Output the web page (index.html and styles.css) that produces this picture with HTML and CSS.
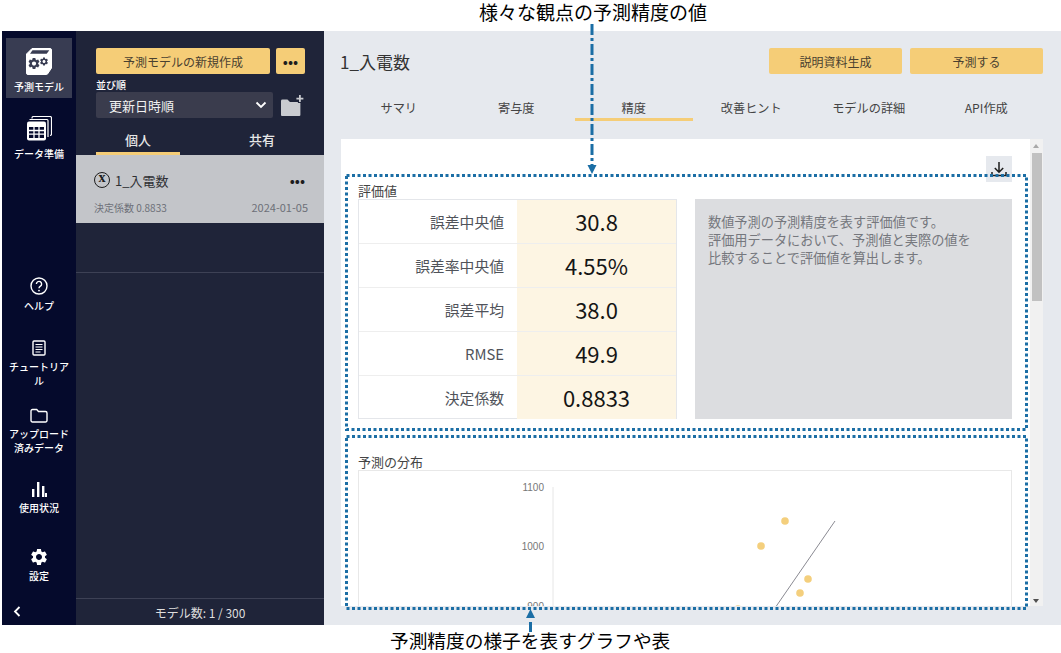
FILE: index.html
```html
<!DOCTYPE html>
<html lang="ja">
<head>
  <meta charset="UTF-8">
  <meta name="viewport" content="width=device-width, initial-scale=1.0">
  <title>予測モデル</title>
  <link rel="stylesheet" href="styles.css">
</head>
<body>

  <svg width="0" height="0" class="defs">
    <symbol id="gear" viewBox="0 0 24 24">
      <path d="M19.14 12.94c.04-.3.06-.61.06-.94 0-.32-.02-.64-.07-.94l2.03-1.58c.18-.14.23-.41.12-.61l-1.92-3.32c-.12-.22-.37-.29-.59-.22l-2.39.96c-.5-.38-1.03-.7-1.62-.94l-.36-2.54c-.04-.24-.24-.41-.48-.41h-3.84c-.24 0-.43.17-.47.41l-.36 2.54c-.59.24-1.13.57-1.62.94l-2.39-.96c-.22-.08-.47 0-.59.22L2.74 8.87c-.12.21-.08.47.12.61l2.03 1.58c-.05.3-.09.63-.09.94s.02.64.07.94l-2.03 1.58c-.18.14-.23.41-.12.61l1.92 3.32c.12.22.37.29.59.22l2.39-.96c.5.38 1.03.7 1.62.94l.36 2.54c.05.24.24.41.48.41h3.84c.24 0 .44-.17.47-.41l.36-2.54c.59-.24 1.13-.56 1.62-.94l2.39.96c.22.08.47 0 .59-.22l1.92-3.32c.12-.22.07-.47-.12-.61l-2.01-1.58zM12 15.6c-1.98 0-3.6-1.62-3.6-3.6s1.62-3.6 3.6-3.6 3.6 1.62 3.6 3.6-1.62 3.6-3.6 3.6z"/>
    </symbol>
  </svg>

  <div class="app">
    <nav class="rail">
      <a class="rail-item active">
        <svg width="26" height="27" viewBox="0 0 26 27">
          <path d="M6 .5h18a1.5 1.5 0 0 1 1.5 1.5v18l-4 6a1 1 0 0 1-1 .5H2A1.5 1.5 0 0 1 .5 25V6z" fill="#fff" stroke="#fff" stroke-linejoin="round"/>
          <path d="M6.5 2.2h16.8l-2.600 3.600H4z" fill="#383c52"/>
          <use href="#gear" x="1" y="8.500" width="14" height="14" fill="#383c52"/>
          <use href="#gear" x="13" y="8.500" width="10" height="10" fill="#383c52"/>
        </svg>
        <span>予測モデル</span>
      </a>
      <a class="rail-item">
        <svg width="26" height="26" viewBox="0 0 26 26">
          <path d="M6 2.5V2a1.5 1.5 0 0 1 1.5-1.5H24A1.5 1.5 0 0 1 25.5 2v16a1.5 1.5 0 0 1-1.5 1.5" fill="none" stroke="#fff" stroke-width="1.2"/>
          <path d="M3.5 3.5H21a1 1 0 0 1 1 1V21" fill="none" stroke="#fff" stroke-width="1.2"/>
          <rect x="1" y="5.5" width="19" height="19" rx="2" fill="#fff"/>
          <path d="M3 11h15v11H3z" fill="#050a2c"/>
          <path d="M3 14.5h15M3 18.2h15M8 11v11M13 11v11" stroke="#fff" stroke-width="1.3"/>
        </svg>
        <span>データ準備</span>
      </a>

      <div class="rail-bottom">
        <a class="rail-item help">
          <svg width="18" height="18" viewBox="0 0 18 18">
            <circle cx="9" cy="9" r="8" fill="none" stroke="#fff" stroke-width="1.4"/>
            <path d="M6.4 7a2.6 2.6 0 1 1 4 2.2c-.9.6-1.4 1-1.4 2.1" fill="none" stroke="#fff" stroke-width="1.4"/>
            <circle cx="9" cy="13.6" r=".9" fill="#fff"/>
          </svg>
          <span>ヘルプ</span>
        </a>
        <a class="rail-item tutorial">
          <svg width="14" height="16" viewBox="0 0 14 16">
            <rect x="1" y="1" width="12" height="14" rx="1" fill="none" stroke="#fff" stroke-width="1.4"/>
            <path d="M3.5 4.5h7M3.5 7h7M3.5 9.5h7M3.5 12h5" stroke="#fff" stroke-width="1.2"/>
          </svg>
          <span>チュートリアル</span>
        </a>
        <a class="rail-item upload">
          <svg width="18" height="15" viewBox="0 0 18 15">
            <path d="M1 3a1.5 1.5 0 0 1 1.5-1.5h4.2l1.8 2h7A1.5 1.5 0 0 1 17 5v7.5a1.5 1.5 0 0 1-1.5 1.5h-13A1.5 1.5 0 0 1 1 12.500z" fill="none" stroke="#fff" stroke-width="1.4"/>
          </svg>
          <span>アップロード済みデータ</span>
        </a>
        <a class="rail-item usage">
          <svg width="16" height="15" viewBox="0 0 16 15">
            <path d="M1 7h2.400v8H1zM6 0h2.400v15H6zM11 4h2.400v11H11zM14 11h2v4h-2z" fill="#fff"/>
          </svg>
          <span>使用状況</span>
        </a>
        <a class="rail-item settings">
          <svg width="20" height="20"><use href="#gear" width="20" height="20" fill="#fff"/></svg>
          <span>設定</span>
        </a>
        <svg class="collapse" width="8" height="11" viewBox="0 0 8 11">
          <path d="M6.500 1 2 5.500 6.500 10" fill="none" stroke="#fff" stroke-width="1.800"/>
        </svg>
      </div>
    </nav>

    <aside class="sidebar">
      <div class="sidebar-top">
        <div class="new-row">
          <button class="btn btn-new">予測モデルの新規作成</button>
          <button class="btn btn-more">•••</button>
        </div>
        <div class="sort-label">並び順</div>
        <div class="sort-row">
          <div class="sort-select">
            <span>更新日時順</span>
            <svg width="12" height="8" viewBox="0 0 12 8"><path d="M1.500 1.500 6 6l4.500-4.500" fill="none" stroke="#fff" stroke-width="1.800"/></svg>
          </div>
          <svg class="add-folder" width="25" height="23" viewBox="0 0 25 23">
            <path d="M1 7a1.500 1.500 0 0 1 1.500-1.500h5l2.500 2.500h10.500V21a1 1 0 0 1-1 1H2a1 1 0 0 1-1-1z" fill="#c9cbd0"/>
            <path d="M20 0v9M15.500 4.500h9" stroke="#1f2439" stroke-width="4"/>
            <path d="M20 1v7M16.500 4.500h7" stroke="#c9cbd0" stroke-width="1.800"/>
          </svg>
        </div>
        <div class="side-tabs">
          <div class="side-tab active">個人</div>
          <div class="side-tab">共有</div>
        </div>
      </div>

      <div class="model-list">
        <div class="model-item">
          <div class="model-head">
            <span class="model-icon">x</span>
            <span class="model-name">1_入電数</span>
            <span class="model-more">•••</span>
          </div>
          <div class="model-meta">
            <span>決定係数 0.8833</span>
            <span class="model-date">2024-01-05</span>
          </div>
        </div>
      </div>

      <div class="sidebar-foot">モデル数: 1 / 300</div>
    </aside>

    <main class="main">
      <header class="main-head">
        <h1>1_入電数</h1>
        <div class="main-actions">
          <button class="btn btn-action">説明資料生成</button>
          <button class="btn btn-action">予測する</button>
        </div>
      </header>

      <div class="tabs">
        <div class="tab">サマリ</div>
        <div class="tab">寄与度</div>
        <div class="tab active">精度</div>
        <div class="tab">改善ヒント</div>
        <div class="tab">モデルの詳細</div>
        <div class="tab">API作成</div>
      </div>

      <div class="panel">
        <div class="panel-body">
          <div class="download-row">
            <button class="download">
              <svg width="16" height="16" viewBox="0 0 16 16">
                <path d="M8 1v10M3.800 7 8 11.200 12.200 7M1 11v3.500h14V11" fill="none" stroke="#1c1c1c" stroke-width="1.500"/>
              </svg>
            </button>
          </div>

          <h2 class="section-title">評価値</h2>
          <div class="metrics">
            <div class="metric-table">
              <div class="metric-row"><div class="metric-name">誤差中央値</div><div class="metric-value">30.8</div></div>
              <div class="metric-row"><div class="metric-name">誤差率中央値</div><div class="metric-value">4.55%</div></div>
              <div class="metric-row"><div class="metric-name">誤差平均</div><div class="metric-value">38.0</div></div>
              <div class="metric-row"><div class="metric-name">RMSE</div><div class="metric-value">49.9</div></div>
              <div class="metric-row"><div class="metric-name">決定係数</div><div class="metric-value">0.8833</div></div>
            </div>
            <div class="metric-note">
              数値予測の予測精度を表す評価値です。<br>
              評価用データにおいて、予測値と実際の値を<br>
              比較することで評価値を算出します。
            </div>
          </div>

          <h2 class="section-title chart-title">予測の分布</h2>
          <div class="chart">
            <svg width="652" height="300" viewBox="0 0 652 300">
              <path d="M194 16V300" stroke="#e6e6e6"/>
              <g class="tick">
                <text x="185" y="20">1100</text>
                <text x="185" y="79">1000</text>
                <text x="185" y="139">900</text>
              </g>
              <path d="M476 50 416 137" stroke="#8a8a92" fill="none"/>
              <g fill="#f4cf7d">
                <circle cx="426" cy="50" r="3.800"/>
                <circle cx="402" cy="75" r="3.800"/>
                <circle cx="449" cy="108" r="3.800"/>
                <circle cx="441" cy="122" r="3.800"/>
                <circle cx="379" cy="138" r="3.800"/>
              </g>
            </svg>
          </div>
        </div>
        <div class="scrollbar">
          <span class="arrow up"></span>
          <div class="thumb"></div>
          <span class="arrow down"></span>
        </div>
      </div>
    </main>
  </div>

  <!-- annotations drawn over the screenshot -->
  <div class="note note-top">様々な観点の予測精度の値</div>
  <div class="note note-bottom">予測精度の様子を表すグラフや表</div>
  <svg class="marks" width="1061" height="653" viewBox="0 0 1061 653">
    <g fill="none" stroke="#1b6ea5" stroke-width="3">
      <rect x="346.500" y="175.500" width="680" height="254" stroke-dasharray="3 2.500"/>
      <rect x="346.500" y="436.500" width="680" height="172" stroke-dasharray="3 2.500"/>
      <path d="M592 24V166" stroke-dasharray="11 3 3 3"/>
      <path d="M530.500 622V632"/>
    </g>
    <path d="M587.500 165h9l-4.500 9zM530.500 609l4.500 9h-9z" fill="#1b6ea5"/>
  </svg>

</body>
</html>
```

FILE: styles.css
```css
* {
  box-sizing: border-box;
}
html, body {
  margin: 0;
  height: 100%;
  background: #fff;
  overflow: hidden;
}
body {
  position: relative;
  font-family: "Noto Sans CJK JP", "Noto Sans", sans-serif;
  color: #333;
}
.defs {
  position: absolute;
}
.app {
  display: flex;
  height: 594px;
  margin: 31px 0 0 2px;
}
button {
  font-family: inherit;
  border: none;
  cursor: pointer;
}
.btn {
  background: #f5cd77;
  color: #4a4130;
  border-radius: 2px;
  font-size: 12px;
  height: 26px;
  padding: 0;
}

/* left rail */
.rail {
  width: 74px;
  flex: none;
  background: #050a2c;
  padding: 7px 4px 0;
  display: flex;
  flex-direction: column;
  color: #fff;
}
.rail-item {
  display: flex;
  flex-direction: column;
  align-items: center;
  padding-top: 10px;
  height: 60px;
  font-size: 10px;
  line-height: 14px;
  font-weight: 500;
  text-align: center;
  margin-bottom: 8px;
}
.rail-item span {
  margin-top: 5px;
}
.rail-item.active {
  background: #383c52;
}
.rail-item svg {
  flex: none;
}
.rail-bottom {
  display: flex;
  flex-direction: column;
  margin-top: 103px;
}
.rail-bottom .rail-item {
  height: auto;
  padding-top: 0;
  margin-bottom: 0;
}
.rail-bottom .rail-item span {
  margin-top: 4px;
}
.rail-item.tutorial {
  margin-top: 27px;
}
.rail-item.upload {
  margin-top: 20px;
}
.rail-item.usage {
  margin-top: 27px;
}
.rail-item.settings {
  margin-top: 32px;
}
.rail-bottom .settings span {
  margin-top: 2px;
}
.rail-bottom .collapse {
  margin: 23px 0 0 7px;
}

/* model list */
.sidebar {
  width: 248px;
  flex: none;
  background: #1f2439;
  display: flex;
  flex-direction: column;
  color: #fff;
}
.sidebar-top {
  padding: 17px 19px 0 20px;
}
.new-row {
  display: flex;
  gap: 6px;
}
.btn-new {
  width: 174px;
}
.btn-more {
  width: 29px;
  color: #1d1d1d;
  font-size: 15px;
  line-height: 26px;
}
.sort-label {
  font-size: 10px;
  line-height: 14px;
  font-weight: 500;
  margin-top: 4px;
}
.sort-row {
  display: flex;
  align-items: center;
  gap: 7px;
}
.sort-select {
  width: 178px;
  height: 26px;
  background: #3a3c4d;
  border-radius: 2px;
  padding: 0 6px 0 13px;
  display: flex;
  align-items: center;
  justify-content: space-between;
  font-size: 13px;
  color: #f1f1f1;
}
.side-tabs {
  display: flex;
  margin-top: 8px;
  width: 228px;
}
.side-tab {
  width: 84px;
  height: 29px;
  line-height: 27px;
  font-size: 13px;
  font-weight: 500;
  text-align: center;
  color: #e6e6e6;
}
.side-tab + .side-tab {
  margin-left: 40px;
}
.side-tab.active {
  border-bottom: 3px solid #f5cd77;
}
.model-list {
  height: 118px;
  border-bottom: 1px solid #3d4155;
}
.model-item {
  height: 68px;
  background: #c3c5c9;
  padding: 15px 16px 0 18px;
  color: #333;
}
.model-head {
  display: flex;
  align-items: center;
  font-size: 13px;
  height: 20px;
}
.model-icon {
  width: 16px;
  height: 16px;
  border: 1.500px solid #1d1d1d;
  border-radius: 50%;
  font-family: "Liberation Serif", serif;
  font-size: 14px;
  font-weight: 700;
  line-height: 10px;
  text-align: center;
  margin-right: 5px;
  color: #1d1d1d;
}
.model-name {
  flex: 1;
  color: #2f3034;
}
.model-more {
  font-size: 15px;
  line-height: 20px;
  color: #1d1d1d;
  margin-right: 3px;
}
.model-meta {
  display: flex;
  justify-content: space-between;
  align-items: baseline;
  font-size: 10px;
  color: #6d7078;
  margin-top: 9px;
}
.model-date {
  font-size: 11px;
}
.sidebar-foot {
  margin-top: auto;
  height: 27px;
  border-top: 1px solid #3d4155;
  text-align: center;
  font-size: 12px;
  line-height: 28px;
  color: #dedede;
}

/* main area */
.main {
  flex: 1;
  min-width: 0;
  background: #e6e9ee;
  padding: 17px 0 0 16px;
}
.main-head {
  display: flex;
  justify-content: space-between;
  align-items: center;
  width: 703px;
  height: 26px;
}
h1 {
  margin: 0;
  font-size: 17px;
  font-weight: 400;
  color: #333;
}
.main-actions {
  display: flex;
  gap: 8px;
}
.btn-action {
  width: 133px;
}
.tabs {
  display: flex;
  margin-top: 22px;
}
.tab {
  width: 117.500px;
  height: 25px;
  text-align: center;
  font-size: 12.200px;
  line-height: 24px;
  color: #444;
}
.tab.active {
  border-bottom: 3px solid #f5cd77;
}
.panel {
  display: flex;
  width: 702px;
  height: 467px;
  margin: 18px 0 0 1px;
}
.panel-body {
  width: 689px;
  background: #fff;
  overflow: hidden;
  padding: 0 18px 0 17px;
}
.download-row {
  display: flex;
  justify-content: flex-end;
  padding-top: 17px;
}
.download {
  width: 26px;
  height: 26px;
  background: #e6e9ee;
  padding: 5px;
  display: flex;
}
.section-title {
  margin: 0;
  font-size: 13px;
  font-weight: 400;
  line-height: 17px;
  color: #444;
}
.metrics {
  display: flex;
  gap: 18px;
  height: 220px;
}
.metric-table {
  width: 319px;
  border: 1px solid #e4e6ea;
  display: flex;
  flex-direction: column;
}
.metric-row {
  flex: 1;
  display: flex;
  border-bottom: 1px solid #eeeeee;
}
.metric-row:last-child {
  border-bottom: none;
}
.metric-name {
  width: 158px;
  padding-right: 13px;
  text-align: right;
  font-size: 14.800px;
  line-height: 43px;
  color: #50535a;
}
.metric-value {
  flex: 1;
  background: #fdf5e3;
  text-align: center;
  font-size: 22px;
  line-height: 43px;
  color: #151515;
}
.metric-note {
  width: 317px;
  background: #dcdde0;
  padding: 14px 13px;
  font-size: 13.200px;
  line-height: 18px;
  color: #75777d;
}
.chart-title {
  margin-top: 34px;
}
.chart {
  width: 654px;
  height: 200px;
  border: 1px solid #e8e8e8;
  border-bottom: none;
}
.chart svg {
  display: block;
}
.tick text {
  font-family: "Liberation Sans", sans-serif;
  font-size: 10px;
  fill: #777;
  text-anchor: end;
}
.scrollbar {
  width: 13px;
  background: #f1f1f1;
  position: relative;
}
.thumb {
  width: 10px;
  height: 148px;
  margin: 14px 0 0 2px;
  background: #c1c1c1;
}
.arrow {
  position: absolute;
  left: 3px;
  border-left: 3.500px solid transparent;
  border-right: 3.500px solid transparent;
}
.arrow.up {
  top: 5px;
  border-bottom: 4px solid #a8a8a8;
}
.arrow.down {
  bottom: 3px;
  border-top: 4px solid #505050;
}

/* annotations */
.note {
  position: absolute;
  line-height: 24px;
  color: #000;
  white-space: nowrap;
}
.note-top {
  left: 479px;
  top: 0;
  font-size: 19px;
}
.note-bottom {
  left: 390px;
  top: 628px;
  font-size: 18.700px;
}
.marks {
  position: absolute;
  left: 0;
  top: 0;
  pointer-events: none;
}
```
